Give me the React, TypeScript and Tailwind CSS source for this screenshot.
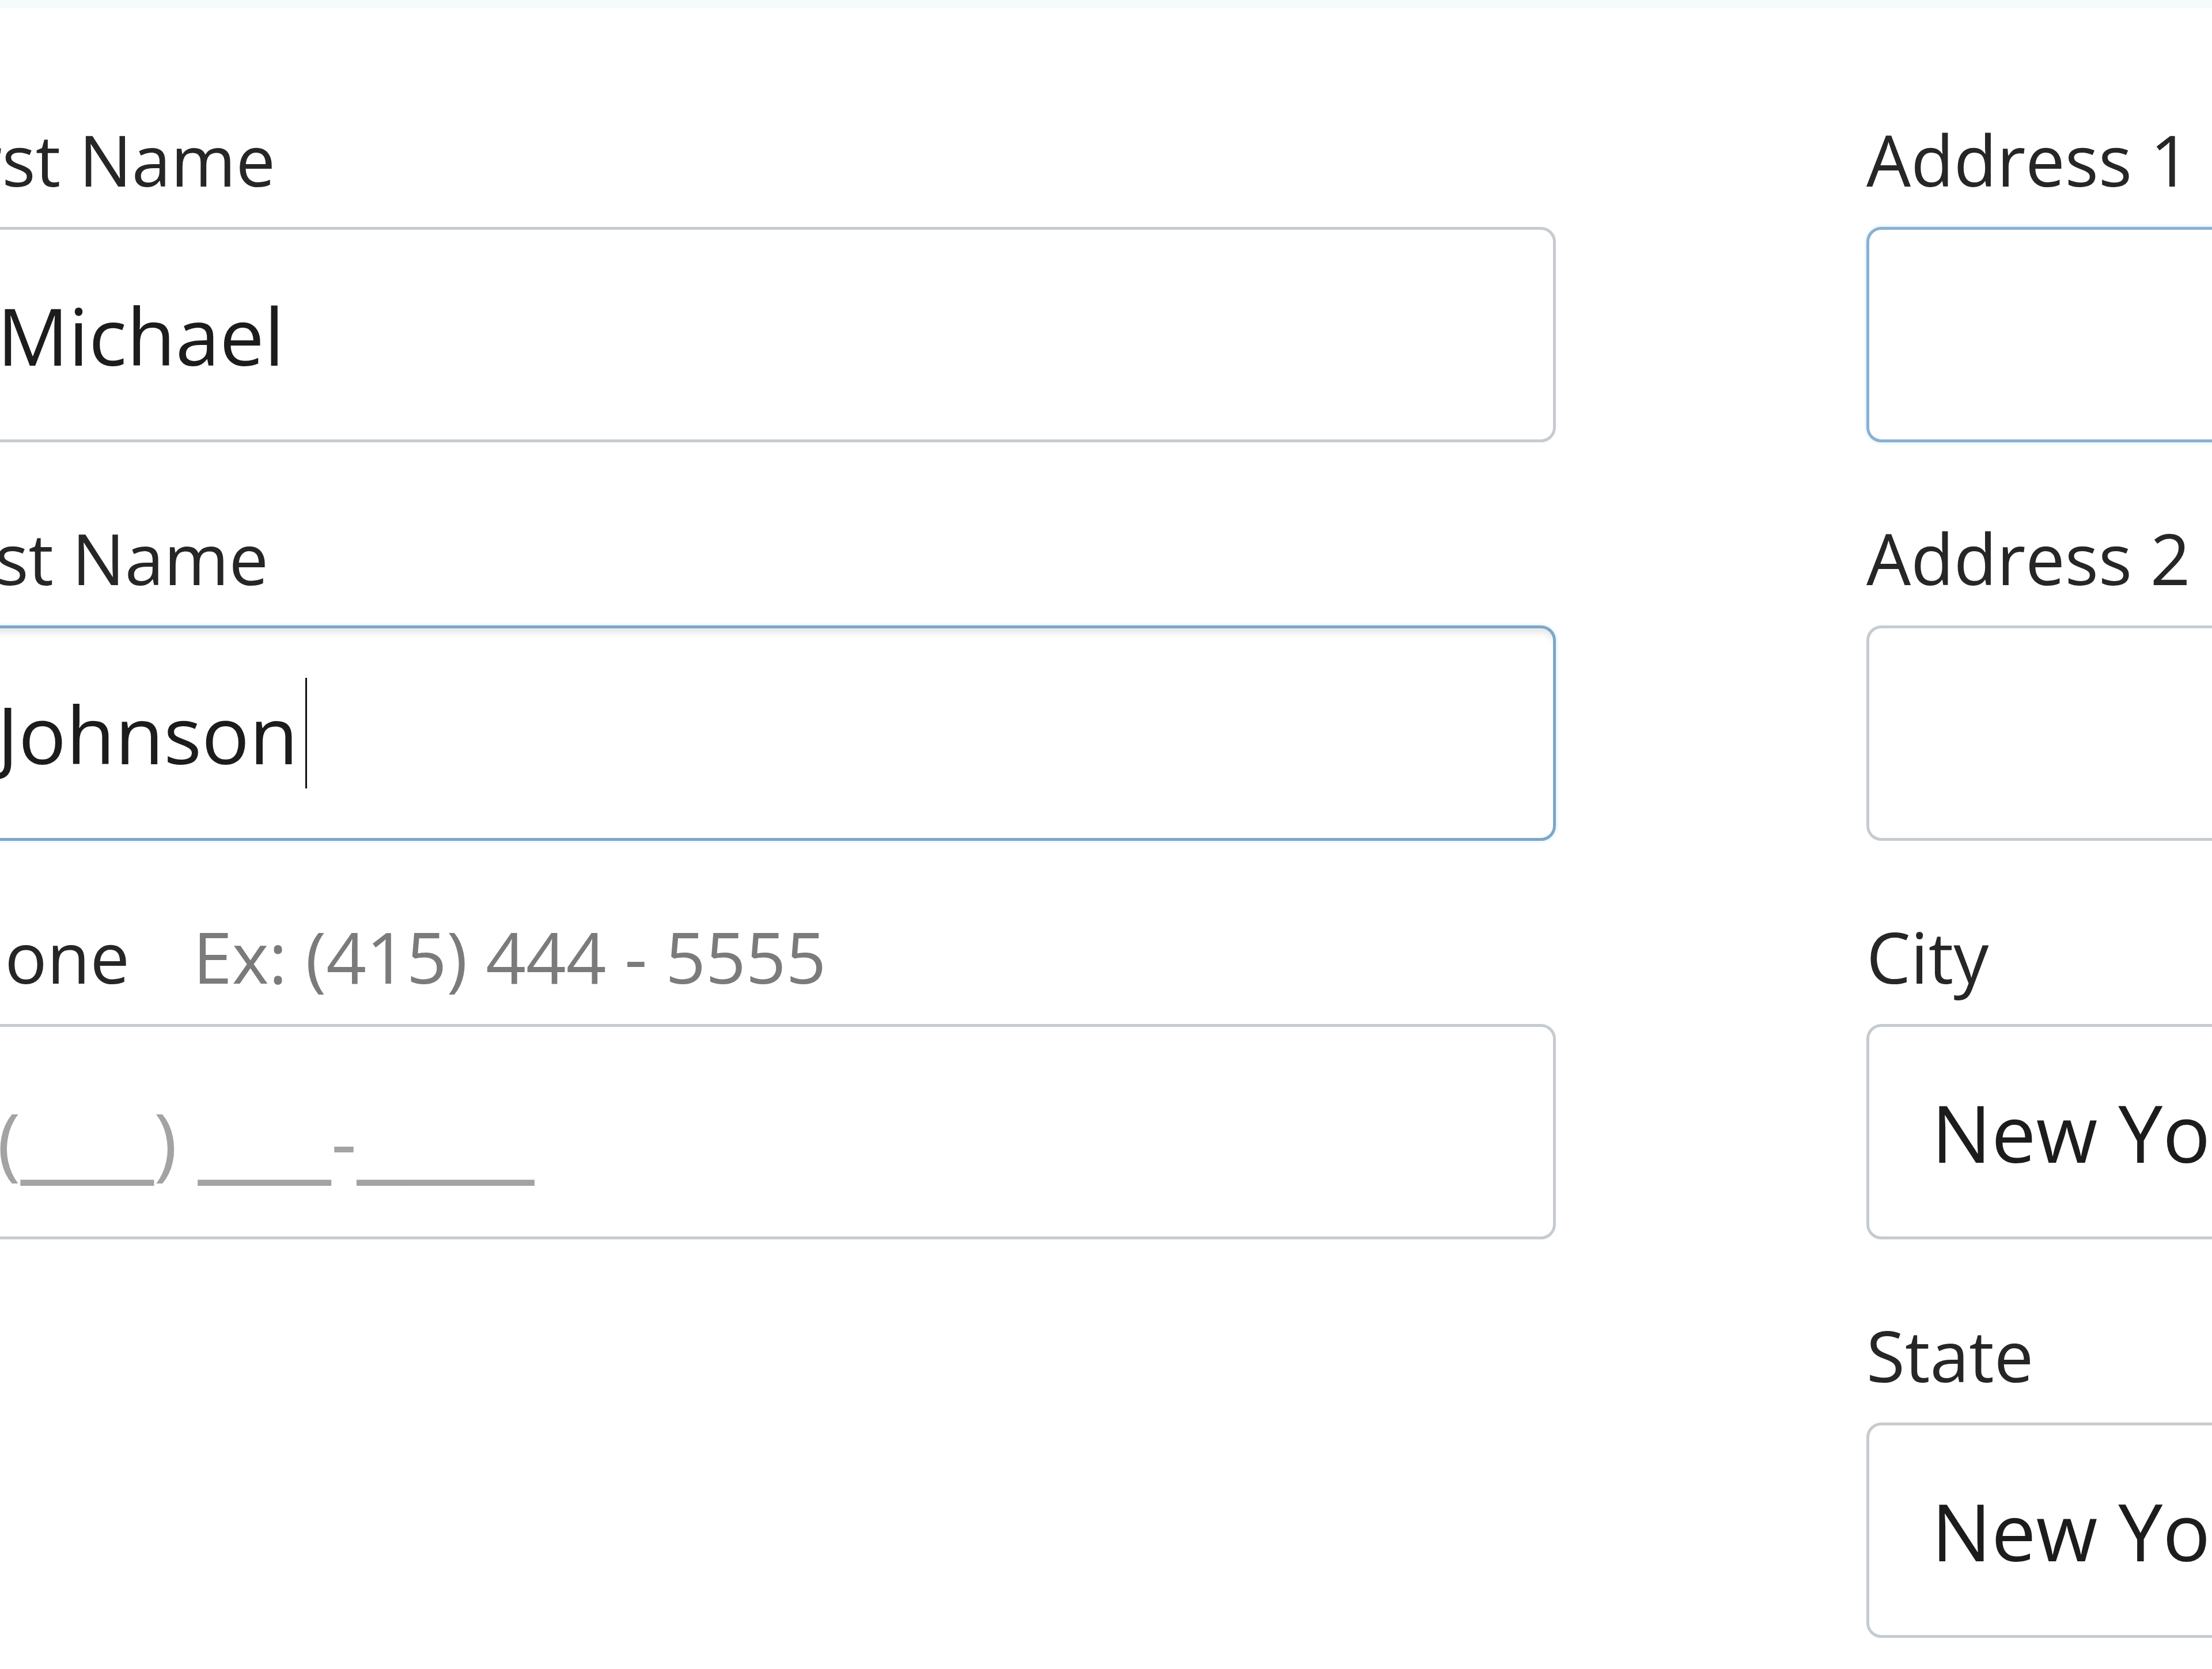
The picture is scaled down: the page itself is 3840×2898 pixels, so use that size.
import React from 'react';
import clsx from 'clsx';

type FieldProps = {
  label: string;
  hint?: string;
  tone?: 'plain' | 'active' | 'focus';
  inset: 'left' | 'right';
  children?: React.ReactNode;
};

const Field: React.FC<FieldProps> = ({ label, hint, tone = 'plain', inset, children }) => (
  <div className="flex flex-col">
    <label className="flex items-baseline text-[122px] leading-none text-[#262626] mb-[56px] whitespace-nowrap">
      <span>{label}</span>
      {hint && <span className="ml-[110px] text-[#7b7b7b]">{hint}</span>}
    </label>
    <div
      role="textbox"
      className={clsx(
        'h-[374px] rounded-[26px] border-[5px] bg-white flex items-center text-[138px] leading-none text-[#1c1c1c] whitespace-nowrap overflow-hidden',
        inset === 'left' ? 'pl-[130px]' : 'pl-[108px]',
        tone === 'plain' && 'border-[#c6cbcf]',
        tone === 'active' && 'border-[#8ab0d3] shadow-[0_0_6px_rgba(170,225,245,0.7)]',
        tone === 'focus' &&
          'border-[#7ea6c8] shadow-[inset_0_16px_14px_-10px_rgba(0,0,0,0.12),0_0_6px_rgba(170,225,245,0.7)]'
      )}
    >
      {children}
    </div>
  </div>
);

export default function App() {
  return (
    <div className="w-full h-[2898px] overflow-hidden bg-white font-['Open_Sans',sans-serif]">
      <div className="h-[14px] bg-[#f5fafa]" />

      <div className="flex ml-[-140px] pt-[202px] gap-[539px]">
        {/* personal details */}
        <div className="w-[2841px] shrink-0 flex flex-col gap-[140px]">
          <Field label="First Name" inset="left">
            <span>Michael</span>
          </Field>
          <Field label="Last Name" inset="left" tone="focus">
            <span>Johnson</span>
            <span className="inline-block w-[3px] h-[192px] bg-[#111] ml-[12px]" />
          </Field>
          <Field label="Phone" hint="Ex: (415) 444 - 5555" inset="left">
            <span className="text-[#a3a3a3]">
              (<span className="text-[176px]">___</span>) <span className="text-[176px]">___</span>-
              <span className="text-[176px]">____</span>
            </span>
          </Field>
        </div>

        {/* address */}
        <div className="w-[1200px] shrink-0 flex flex-col gap-[140px]">
          <Field label="Address 1" inset="right" tone="active" />
          <Field label="Address 2" inset="right" />
          <Field label="City" inset="right">
            <span>New York</span>
          </Field>
          <Field label="State" inset="right">
            <span>New York</span>
          </Field>
        </div>
      </div>
    </div>
  );
}
